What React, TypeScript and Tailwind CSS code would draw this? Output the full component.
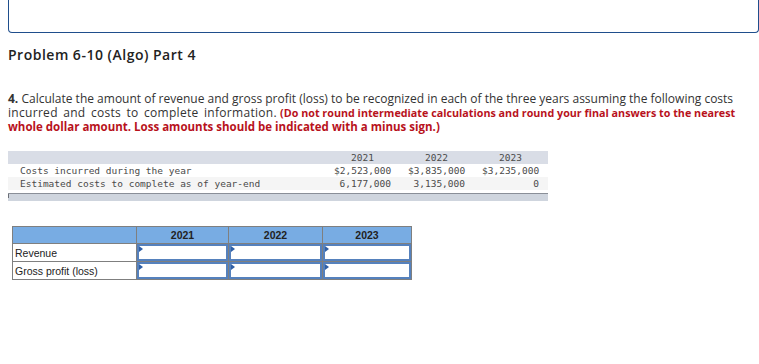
import React from "react";

const mono = { fontFamily: '"DejaVu Sans Mono", "Liberation Mono", monospace' };

function InputCell() {
  return (
    <td className="border border-[#7f7f7f] p-0 h-[18px]">
      <div className="relative h-[17px] border-2 border-[#5581bd] bg-white">
        <div className="absolute left-0 top-0 w-0 h-0 border-t-[3px] border-b-[3px] border-l-[4px] border-t-transparent border-b-transparent border-l-[#2f5fa6]" />
      </div>
    </td>
  );
}

export default function App() {
  return (
    <div className="w-[759px] h-[364px] bg-white overflow-hidden text-[#333]" style={{ fontFamily: '"Open Sans", "Liberation Sans", sans-serif' }}>
      <div className="ml-2 h-[33px] border-x border-b border-[#1f4e8c] rounded-b-[4px]" />
      <div className="ml-2 mt-[13px] text-[14px] leading-[17px] font-semibold tracking-[0.5px] text-[#222]">
        Problem 6-10 (Algo) Part 4
      </div>
      <div className="ml-2 mt-[29px] text-[12px] text-[#333] whitespace-nowrap">
        <div className="h-[14px] leading-[14px]">
          <span className="font-bold">4.</span> Calculate the amount of revenue and gross profit (loss) to be recognized in each of the three years assuming the following costs
        </div>
        <div className="h-[14px] leading-[14px]">
          <span className="tracking-[0.3px] [word-spacing:2px]">incurred and costs to complete information.</span>{" "}
          <span className="font-bold text-[#b8121c] text-[10.75px]">
            (Do not round intermediate calculations and round your final answers to the nearest
          </span>
        </div>
        <div className="h-[14px] leading-[14px] font-bold text-[#b8121c] text-[11.5px]">
          whole dollar amount. Loss amounts should be indicated with a minus sign.)
        </div>
      </div>

      <div className="ml-2 mt-[17px] w-[540px] text-[9.5px] text-[#4a4a4a]" style={mono}>
        <div className="grid grid-cols-[1fr_57px_57px_57px] gap-x-[17px] pl-[12px] pr-[9px] h-[13px] leading-[13px] bg-[#d9dde6]">
          <div />
          <div className="text-center">2021</div>
          <div className="text-center">2022</div>
          <div className="text-center">2023</div>
        </div>
        <div className="grid grid-cols-[1fr_57px_57px_57px] gap-x-[17px] pl-[12px] pr-[9px] h-[13px] leading-[13px] bg-white whitespace-pre">
          <div>Costs incurred during the year</div>
          <div className="text-right">$2,523,000</div>
          <div className="text-right">$3,835,000</div>
          <div className="text-right">$3,235,000</div>
        </div>
        <div className="grid grid-cols-[1fr_57px_57px_57px] gap-x-[17px] pl-[12px] pr-[9px] h-[13px] leading-[13px] bg-[#f5f5f5] whitespace-pre">
          <div>Estimated costs to complete as of year-end</div>
          <div className="text-right">6,177,000</div>
          <div className="text-right">3,135,000</div>
          <div className="text-right">0</div>
        </div>
        <div className="mt-[3px] h-[8px] border-t border-[#8a8f98] bg-[#cfd5de] flex">
          <div className="w-px h-[4px] bg-[#6b6f77]" />
        </div>
      </div>

      <table className="ml-[12px] mt-[25px] border-collapse text-[10.5px] text-[#222]" style={{ fontFamily: '"Liberation Sans", Arial, sans-serif' }}>
        <colgroup>
          <col className="w-[124px]" />
          <col className="w-[92px]" />
          <col className="w-[94px]" />
          <col className="w-[89px]" />
        </colgroup>
        <thead>
          <tr className="h-[17px] bg-[#78ace3]">
            <th className="border border-[#7f7f7f] p-0" />
            <th className="border border-[#7f7f7f] p-0 font-bold text-center leading-[15px]">2021</th>
            <th className="border border-[#7f7f7f] p-0 font-bold text-center leading-[15px]">2022</th>
            <th className="border border-[#7f7f7f] p-0 font-bold text-center leading-[15px]">2023</th>
          </tr>
        </thead>
        <tbody>
          <tr>
            <td className="border border-[#7f7f7f] px-[2px] py-0 h-[18px] leading-[16px]">Revenue</td>
            <InputCell />
            <InputCell />
            <InputCell />
          </tr>
          <tr>
            <td className="border border-[#7f7f7f] px-[2px] py-0 h-[18px] leading-[16px]">Gross profit (loss)</td>
            <InputCell />
            <InputCell />
            <InputCell />
          </tr>
        </tbody>
      </table>
    </div>
  );
}
